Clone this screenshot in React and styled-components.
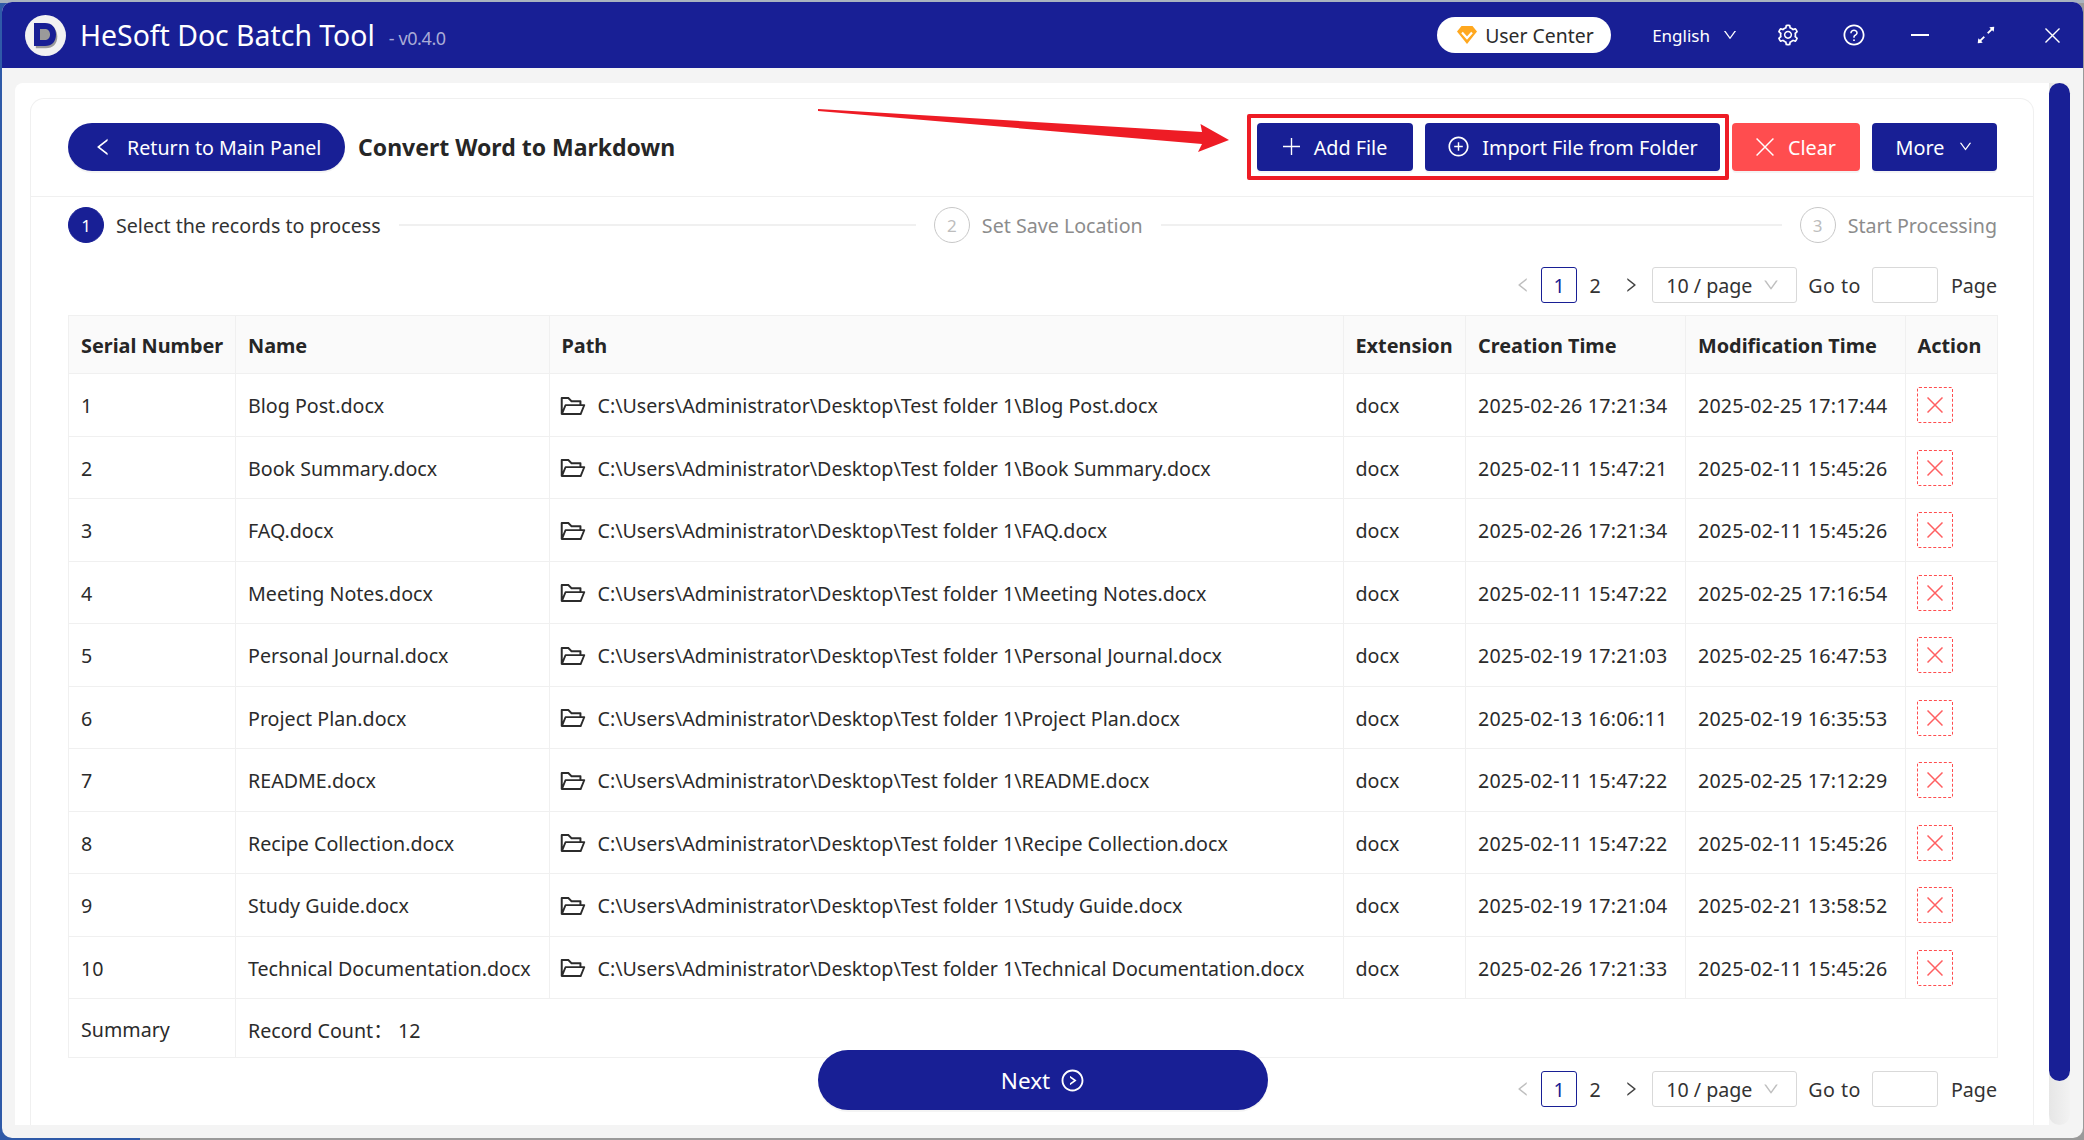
import React from 'react';
import styled, { createGlobalStyle } from 'styled-components';
import {
  AiOutlineDown,
  AiOutlineExpandAlt,
  AiOutlineFolderOpen,
  AiOutlineLeft,
  AiOutlinePlusCircle,
  AiOutlineQuestionCircle,
  AiOutlineRight,
  AiOutlineRightCircle,
  AiOutlineSetting,
} from 'react-icons/ai';

const NAVY = '#181f95';
const ROOT_PATH = 'C:\\Users\\Administrator\\Desktop\\Test folder 1\\';

const records = [
  ['Blog Post.docx', '2025-02-26 17:21:34', '2025-02-25 17:17:44'],
  ['Book Summary.docx', '2025-02-11 15:47:21', '2025-02-11 15:45:26'],
  ['FAQ.docx', '2025-02-26 17:21:34', '2025-02-11 15:45:26'],
  ['Meeting Notes.docx', '2025-02-11 15:47:22', '2025-02-25 17:16:54'],
  ['Personal Journal.docx', '2025-02-19 17:21:03', '2025-02-25 16:47:53'],
  ['Project Plan.docx', '2025-02-13 16:06:11', '2025-02-19 16:35:53'],
  ['README.docx', '2025-02-11 15:47:22', '2025-02-25 17:12:29'],
  ['Recipe Collection.docx', '2025-02-11 15:47:22', '2025-02-11 15:45:26'],
  ['Study Guide.docx', '2025-02-19 17:21:04', '2025-02-21 13:58:52'],
  ['Technical Documentation.docx', '2025-02-26 17:21:33', '2025-02-11 15:45:26'],
];

const columnWidths = [167, 313.5, 794, 122.5, 220, 219.5, 92];

const GlobalStyle = createGlobalStyle`
  html, body {
    margin: 0;
    height: 1140px;
    overflow: hidden;
    background: linear-gradient(90deg, #2f5aa8 0, #2f5aa8 140px, #9a9a9a 140px);
    font-family: "Noto Sans", "Noto Sans CJK SC", sans-serif;
    color: #2b2b2b;
  }
  body::before {
    content: '';
    position: fixed;
    inset: 0 0 auto 0;
    height: 3px;
    background: #a9b3bf;
  }
`;

const Window = styled.div`
  position: relative;
  box-sizing: border-box;
  display: flex;
  flex-direction: column;
  width: 2081px;
  height: 1136px;
  margin: 2px 1px 2px 2px;
  border-radius: 10px;
  overflow: hidden;
  background: #f4f4f4;
`;

const TitleBar = styled.header`
  flex: none;
  display: flex;
  align-items: center;
  height: 66px;
  padding: 0 19px 0 23px;
  background: ${NAVY};
  color: #fff;
`;

const Logo = styled.svg`
  width: 41px;
  height: 41px;
  flex: none;
`;

const AppName = styled.span`
  margin-left: 14px;
  font-size: 28.4px;
`;

const Version = styled.span`
  margin: 5px 0 0 14px;
  font-size: 18px;
  letter-spacing: -0.4px;
  color: #a9abd6;
`;

const TitleActions = styled.div`
  display: flex;
  align-items: center;
  margin-left: auto;
`;

const UserPill = styled.div`
  display: flex;
  align-items: center;
  gap: 8px;
  height: 36px;
  width: 174px;
  box-sizing: border-box;
  padding-left: 20px;
  border-radius: 18px;
  background: #fff;
  color: #2b2b2b;
  font-size: 19.4px;
`;

const Language = styled.div`
  display: flex;
  align-items: center;
  gap: 12px;
  margin: 0 38px 0 41px;
  font-size: 17px;
  svg {
    font-size: 16px;
  }
`;

const WindowIcons = styled.div`
  display: flex;
  gap: 42px;
  align-items: center;
`;

const WindowIcon = styled.span`
  display: flex;
  align-items: center;
  justify-content: center;
  width: 24px;
  height: 24px;
  font-size: 24px;
`;

const MinimizeBar = styled.span`
  display: block;
  width: 18px;
  height: 2px;
  background: #fff;
`;

const Body = styled.div`
  flex: 1;
  display: flex;
  min-height: 0;
  padding: 15px 13px 13px;
`;

const Panel = styled.main`
  flex: 1;
  min-width: 0;
  box-sizing: border-box;
  padding: 15px 15px 0;
  background: #fff;
  border-radius: 8px 0 0 0;
`;

const Card = styled.section`
  box-sizing: border-box;
  height: 100%;
  border: 1px solid #f0f0f0;
  border-bottom: 0;
  border-radius: 14px 14px 0 0;
`;

const ScrollRail = styled.div`
  flex: none;
  width: 21px;
  border-radius: 0 0 11px 11px;
  background: linear-gradient(90deg, #e6e6e6, #f2f2f2);
`;

const ScrollThumb = styled.div`
  height: 998px;
  border-radius: 11px;
  background: ${NAVY};
`;

const Toolbar = styled.div`
  position: relative;
  display: flex;
  align-items: center;
  height: 98px;
  padding: 0 36px 2px 37px;
  box-sizing: border-box;
  border-bottom: 1px solid #f0f0f0;
`;

const BackButton = styled.button`
  display: flex;
  align-items: center;
  gap: 13px;
  height: 48px;
  width: 277px;
  box-sizing: border-box;
  padding: 2px 0 0 24px;
  border: 0;
  border-radius: 24px;
  background: ${NAVY};
  box-shadow: 0 2px 0 rgba(0, 0, 0, 0.045);
  color: #fff;
  font: inherit;
  font-size: 19.65px;
  white-space: nowrap;
  svg {
    margin-top: -2px;
    font-size: 22px;
  }
`;

const PageTitle = styled.h1`
  margin: 0 0 0 13px;
  font-size: 23px;
  font-weight: 700;
  color: #262626;
`;

const ButtonGroup = styled.div`
  position: relative;
  display: flex;
  gap: 12px;
  margin-left: auto;
`;

const ActionButton = styled.button`
  display: flex;
  align-items: center;
  justify-content: center;
  gap: ${(p) => p.$gap || 14}px;
  width: ${(p) => p.$width}px;
  height: 48px;
  padding: 2px 0 0;
  border: 0;
  border-radius: 4px;
  background: ${(p) => (p.$danger ? '#ff4d4f' : NAVY)};
  box-shadow: 0 2px 0 rgba(0, 0, 0, 0.045);
  color: #fff;
  font: inherit;
  font-size: 19.8px;
  svg {
    margin-top: -2px;
    font-size: ${(p) => p.$iconSize || 20}px;
  }
`;

const LineIcon = styled.svg`
  flex: none;
  width: ${(p) => p.$size}px;
  height: ${(p) => p.$size}px;
  fill: none;
  stroke: currentColor;
  stroke-width: ${(p) => p.$weight || 1.3}px;
`;

const Highlight = styled.div`
  position: absolute;
  top: -9px;
  left: -10px;
  width: 482px;
  height: 66px;
  box-sizing: border-box;
  border: 4px solid #ee1c25;
  border-radius: 2px;
  pointer-events: none;
`;

const Arrow = styled.svg`
  position: absolute;
  left: 787px;
  top: 10px;
  width: 412px;
  height: 45px;
`;

const Steps = styled.div`
  display: flex;
  align-items: center;
  margin: 10px 36px 0 37px;
`;

const Step = styled.div`
  display: flex;
  align-items: center;
  flex: ${(p) => (p.$last ? 'none' : 1)};
  font-size: 19.65px;
  color: ${(p) => (p.$active ? '#333' : '#8c8c8c')};
`;

const StepBadge = styled.span`
  flex: none;
  display: flex;
  align-items: center;
  justify-content: center;
  box-sizing: border-box;
  width: 36px;
  height: 36px;
  margin-right: 12px;
  border-radius: 50%;
  border: 1px solid ${(p) => (p.$active ? NAVY : '#c8c8c8')};
  background: ${(p) => (p.$active ? NAVY : '#fff')};
  color: ${(p) => (p.$active ? '#fff' : '#bdbdbd')};
  font-size: 17px;
`;

const StepLine = styled.span`
  flex: 1;
  height: 2px;
  margin: 0 18px;
  background: #f0f0f0;
`;

const PagerRow = styled.div`
  display: flex;
  justify-content: flex-end;
  margin: 24px 36px 12px 0;
`;

const Pager = styled.nav`
  display: flex;
  align-items: center;
  height: 36px;
  font-size: 19.65px;
  color: #333;
`;

const PagerArrow = styled.span`
  display: flex;
  justify-content: center;
  width: 18px;
  margin: ${(p) => (p.$next ? '0 12px 0 0' : '0 9px 0 0')};
  font-size: 20px;
  color: ${(p) => (p.$disabled ? '#bfbfbf' : '#444')};
`;

const PageNumber = styled.span`
  display: flex;
  align-items: center;
  justify-content: center;
  box-sizing: border-box;
  width: 36px;
  height: 36px;
  margin-right: ${(p) => (p.$current ? 0 : 9)}px;
  border: 1px solid ${(p) => (p.$current ? NAVY : 'transparent')};
  border-radius: 3px;
  color: ${(p) => (p.$current ? NAVY : 'inherit')};
`;

const PageSize = styled.span`
  display: flex;
  align-items: center;
  justify-content: space-between;
  box-sizing: border-box;
  width: 145px;
  height: 36px;
  padding: 0 16px 0 13px;
  border: 1px solid #d9d9d9;
  border-radius: 3px;
  white-space: nowrap;
  svg {
    font-size: 18px;
    color: #bfbfbf;
  }
`;

const GoToLabel = styled.span`
  margin: 0 11px;
  letter-spacing: 0.5px;
  white-space: nowrap;
`;

const GoToInput = styled.span`
  box-sizing: border-box;
  width: 66px;
  height: 36px;
  border: 1px solid #d9d9d9;
  border-radius: 3px;
`;

const PageLabel = styled.span`
  margin-left: 13px;
`;

const TableWrap = styled.div`
  margin: 0 36px 0 37px;
`;

const Table = styled.table`
  width: 100%;
  table-layout: fixed;
  border-collapse: separate;
  border-spacing: 0;
  border-top: 1px solid #f0f0f0;
  border-left: 1px solid #f0f0f0;
  font-size: 19.65px;
`;

const HeadCell = styled.th`
  box-sizing: border-box;
  height: 58px;
  padding: 1px 0 0 12px;
  text-align: left;
  font-size: 19.85px;
  font-weight: 700;
  white-space: nowrap;
  color: #262626;
  background: #fafafa;
  border-right: 1px solid #f0f0f0;
  border-bottom: 1px solid #f0f0f0;
`;

const Cell = styled.td`
  box-sizing: border-box;
  height: ${(p) => (p.$summary ? 59 : 62.5)}px;
  padding: 2px 0 0 12px;
  white-space: nowrap;
  letter-spacing: ${(p) => (p.$time ? '0.2px' : 'normal')};
  border-right: 1px solid #f0f0f0;
  border-bottom: 1px solid #f0f0f0;
`;

const PathText = styled.span`
  display: flex;
  align-items: center;
  gap: 11px;
  svg {
    flex: none;
    margin-left: -3px;
    font-size: 28px;
  }
`;

const DeleteBox = styled.span`
  display: flex;
  align-items: center;
  justify-content: center;
  box-sizing: border-box;
  width: 36px;
  height: 36px;
  margin: -1px 0 0 -1px;
  border: 1px dashed #ff4d4f;
  border-radius: 2px;
  color: #ff5f61;
`;

const Footer = styled.div`
  display: flex;
  align-items: flex-start;
  justify-content: space-between;
  margin: -8px 36px 0 787px;
`;

const NextButton = styled.button`
  display: flex;
  align-items: center;
  justify-content: center;
  gap: 10px;
  width: 450px;
  height: 60px;
  padding: 0;
  border: 0;
  border-radius: 30px;
  background: ${NAVY};
  box-shadow: 0 2px 0 rgba(0, 0, 0, 0.045);
  color: #fff;
  font: inherit;
  font-size: 22.5px;
  svg {
    font-size: 25px;
  }
`;

const FooterPager = styled.div`
  margin-top: 21px;
`;

const Cross = ({ size, weight }) => (
  <LineIcon viewBox="0 0 16 16" $size={size} $weight={weight}>
    <path d="M0.500 0.500L15.500 15.500M15.500 0.500L0.500 15.500" />
  </LineIcon>
);

const Plus = ({ size }) => (
  <LineIcon viewBox="0 0 16 16" $size={size}>
    <path d="M8 0V16M0 8H16" />
  </LineIcon>
);

const Pagination = () => (
  <Pager>
    <PagerArrow $disabled>
      <AiOutlineLeft />
    </PagerArrow>
    <PageNumber $current>1</PageNumber>
    <PageNumber>2</PageNumber>
    <PagerArrow $next>
      <AiOutlineRight />
    </PagerArrow>
    <PageSize>
      10 / page
      <AiOutlineDown />
    </PageSize>
    <GoToLabel>Go to</GoToLabel>
    <GoToInput />
    <PageLabel>Page</PageLabel>
  </Pager>
);

const App = () => {
  return (
    <Window>
      <GlobalStyle />
      <TitleBar>
        <Logo viewBox="0 0 41 41">
          <circle cx="20.5" cy="20.5" r="20.5" fill="#f2f2f2" />
          <path
            d="M10 9h10c7 0 11.500 4.500 11.500 11.500S27 32 20 32H10z"
            fill="#9a9a9a"
            transform="translate(0.8 1.2)"
          />
          <path
            fillRule="evenodd"
            d="M9 8h11c7 0 11 4.500 11 11.500S27 31 20 31H9zM15 14v11h4.500c3.500 0 5.500-2 5.500-5.500S23 14 19.500 14z"
            fill={NAVY}
          />
        </Logo>
        <AppName>HeSoft Doc Batch Tool</AppName>
        <Version>- v0.4.0</Version>
        <TitleActions>
          <UserPill>
            <svg width="20" height="18" viewBox="0 0 20 18">
              <path d="M4.500 0h11L20 5.500 10 18 0 5.500z" fill="#ffa81f" />
              <path d="M5 6.500l5 5.500 5-5.500" fill="none" stroke="#fff" strokeWidth="2.200" />
            </svg>
            User Center
          </UserPill>
          <Language>
            English
            <AiOutlineDown />
          </Language>
          <WindowIcons>
            <WindowIcon>
              <AiOutlineSetting />
            </WindowIcon>
            <WindowIcon>
              <AiOutlineQuestionCircle />
            </WindowIcon>
            <WindowIcon>
              <MinimizeBar />
            </WindowIcon>
            <WindowIcon>
              <AiOutlineExpandAlt />
            </WindowIcon>
            <WindowIcon>
              <Cross size={15} weight={1.5} />
            </WindowIcon>
          </WindowIcons>
        </TitleActions>
      </TitleBar>
      <Body>
        <Panel>
          <Card>
            <Toolbar>
              <BackButton>
                <AiOutlineLeft />
                Return to Main Panel
              </BackButton>
              <PageTitle>Convert Word to Markdown</PageTitle>
              <Arrow viewBox="0 0 412 45">
                <path d="M0 0L384 23L382.500 15L411 31L380 43L384 35L0 2z" fill="#ee1c25" />
              </Arrow>
              <ButtonGroup>
                <Highlight />
                <ActionButton $width={156}>
                  <Plus size={17} />
                  Add File
                </ActionButton>
                <ActionButton $width={295} $iconSize={23} $gap={12}>
                  <AiOutlinePlusCircle />
                  Import File from Folder
                </ActionButton>
                <ActionButton $width={128} $danger>
                  <Cross size={18} />
                  Clear
                </ActionButton>
                <ActionButton $width={125} $iconSize={15}>
                  More
                  <AiOutlineDown />
                </ActionButton>
              </ButtonGroup>
            </Toolbar>
            <Steps>
              <Step $active>
                <StepBadge $active>1</StepBadge>
                Select the records to process
                <StepLine />
              </Step>
              <Step>
                <StepBadge>2</StepBadge>
                Set Save Location
                <StepLine />
              </Step>
              <Step $last>
                <StepBadge>3</StepBadge>
                Start Processing
              </Step>
            </Steps>
            <PagerRow>
              <Pagination />
            </PagerRow>
            <TableWrap>
              <Table>
                <colgroup>
                  {columnWidths.map((width) => (
                    <col key={width} style={{ width }} />
                  ))}
                </colgroup>
                <thead>
                  <tr>
                    {[
                      'Serial Number',
                      'Name',
                      'Path',
                      'Extension',
                      'Creation Time',
                      'Modification Time',
                      'Action',
                    ].map((title) => (
                      <HeadCell key={title}>{title}</HeadCell>
                    ))}
                  </tr>
                </thead>
                <tbody>
                  {records.map(([name, created, modified], index) => (
                    <tr key={name}>
                      <Cell>{index + 1}</Cell>
                      <Cell>{name}</Cell>
                      <Cell>
                        <PathText>
                          <AiOutlineFolderOpen />
                          {ROOT_PATH + name}
                        </PathText>
                      </Cell>
                      <Cell>docx</Cell>
                      <Cell $time>{created}</Cell>
                      <Cell $time>{modified}</Cell>
                      <Cell>
                        <DeleteBox>
                          <Cross size={16} weight={1.5} />
                        </DeleteBox>
                      </Cell>
                    </tr>
                  ))}
                  <tr>
                    <Cell $summary>Summary</Cell>
                    <Cell $summary colSpan={6}>
                      Record Count： 12
                    </Cell>
                  </tr>
                </tbody>
              </Table>
            </TableWrap>
            <Footer>
              <NextButton>
                Next
                <AiOutlineRightCircle />
              </NextButton>
              <FooterPager>
                <Pagination />
              </FooterPager>
            </Footer>
          </Card>
        </Panel>
        <ScrollRail>
          <ScrollThumb />
        </ScrollRail>
      </Body>
    </Window>
  );
};

export default App;
